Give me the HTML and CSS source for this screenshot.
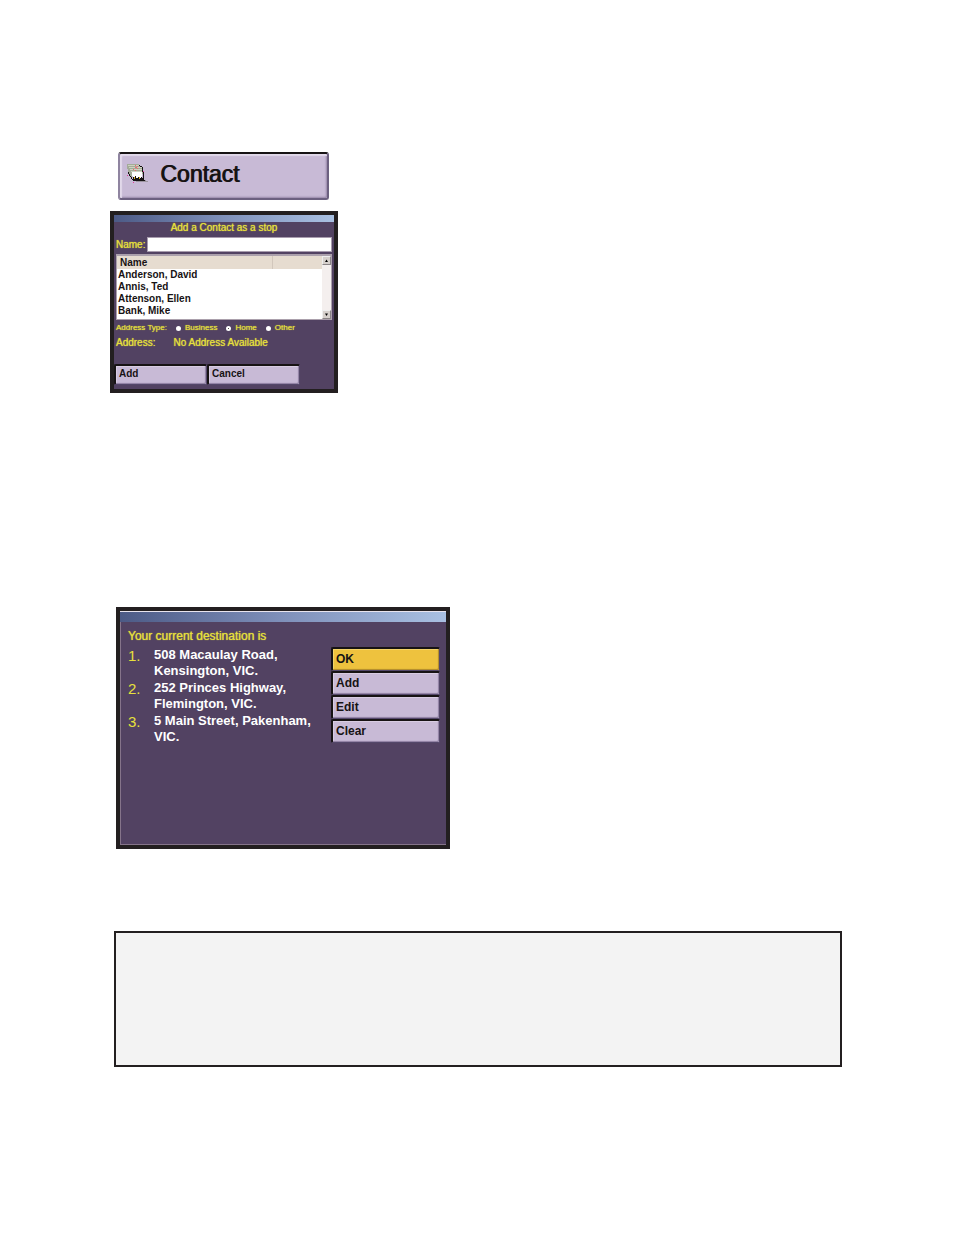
FILE: index.html
```
<!DOCTYPE html>
<html lang="en">
  <head>
  <meta charset="utf-8">
  <title>Contact</title>
  <link rel="stylesheet" href="styles.css">
  </head>

  <body>
  <button type="button" class="contact">
    <svg class="cards" viewBox="0 0 63 60" width="21" height="20" shape-rendering="crispEdges" aria-hidden="true">
      <path d="M0 0h36v6h9v6h3v18h-3v6H15v6h-3v-3H9v-6H6v-9H3v-9H0z" fill="#a3ab98"/>
      <path d="M3 3h33v3H3zM6 9h39v3H6zM9 15h36v3H9zM12 21h36v3H12z" fill="#cdd2c0"/>
      <path d="M24 3h3v3h-3zM24 9h6v3h-6zM30 6h3v3h-3zM18 15h3v3h-3zM24 18h3v3h-3zM30 12h3v3h-3z" fill="#ef6670"/>
      <path d="M15 24h30v18H18v-6h-3z" fill="#fff"/>
      <path d="M36 3h3v3h-3zM39 6h6v3h-6zM45 9h3v15h-3zM48 24h3v18h-3zM3 24h3v6H3zM6 30h3v6H6zM9 36h3v3H9zM12 39h3v6h-3zM15 45h3v3h-3z" fill="#171314"/>
      <path d="M18 39h6v-3h3v6h6v-3h3v3h6v-3h3v3h6v6h6v3h-9v3H27v-3h-9z" fill="#171314"/>
      <path d="M21 39h3v6h-3zM36 39h3v6h-3z" fill="#d8b02c"/>
      <path d="M27 54h36v-3h-6v-3h-3v3H27z" fill="#9c949f"/>
      <path d="M0 33h3v3H0zM18 54h3v3h-3zM48 21h3v3h-3z" fill="#e03a9a"/>
    </svg>
    <span>Contact</span>
  </button>

  <form class="window picker">
    <div class="titlebar"></div>
    <h2>Add a Contact as a stop</h2>
    <div class="name-row">
      <label for="name">Name:</label>
      <input id="name" type="text">
    </div>
    <div class="list">
      <table>
        <thead>
          <tr><th>Name</th><th class="extra"></th></tr>
        </thead>
        <tbody>
          <tr><td colspan="2">Anderson, David</td></tr>
          <tr><td colspan="2">Annis, Ted</td></tr>
          <tr><td colspan="2">Attenson, Ellen</td></tr>
          <tr><td colspan="2">Bank, Mike</td></tr>
        </tbody>
      </table>
      <div class="scroll">
        <button type="button" aria-label="Scroll up"><svg viewBox="0 0 10 10" width="5" height="5"><path d="M2 8h6L5 3z"/></svg></button>
        <button type="button" aria-label="Scroll down"><svg viewBox="0 0 10 10" width="5" height="5"><path d="M2 3h6L5 8z"/></svg></button>
      </div>
    </div>
    <div class="types">
      <span>Address Type:</span>
      <label><input type="radio" name="type"> Business</label>
      <label><input type="radio" name="type" checked> Home</label>
      <label><input type="radio" name="type"> Other</label>
    </div>
    <div class="address">
      <span>Address:</span>
      <span>No Address Available</span>
    </div>
    <div class="actions">
      <button type="button" class="key">Add</button>
      <button type="button" class="key">Cancel</button>
    </div>
  </form>

  <div class="window route">
    <div class="titlebar"></div>
    <h2>Your current destination is</h2>
    <div class="route-body">
      <ol>
        <li><span class="num">1.</span><span>508 Macaulay Road,<br>Kensington, VIC.</span></li>
        <li><span class="num">2.</span><span>252 Princes Highway,<br>Flemington, VIC.</span></li>
        <li><span class="num">3.</span><span>5 Main Street, Pakenham,<br>VIC.</span></li>
      </ol>
      <div class="menu">
        <button type="button" class="key ok">OK</button>
        <button type="button" class="key">Add</button>
        <button type="button" class="key">Edit</button>
        <button type="button" class="key">Clear</button>
      </div>
    </div>
  </div>

  <div class="note"></div>
  </body>
</html>
```

FILE: styles.css
```
* {
  box-sizing: border-box;
}

body {
  margin: 0;
  padding: 152px 112px 168px 110px;
  background: #fff;
  color: #171314;
  font-family: "Liberation Sans", Arial, sans-serif;
}

button, input {
  font: inherit;
  color: inherit;
  margin: 0;
}

h2 {
  margin: 0;
  font-weight: normal;
  color: #e6e03c;
  text-shadow: 0 0 1px #e6e03c;
}

.contact {
  display: flex;
  align-items: center;
  gap: 12px;
  width: 211px;
  height: 48px;
  margin-left: 8px;
  padding: 0 7px 4px;
  border: 2px solid;
  border-color: #171314 #6c6080 #6c6080 #8f84a0;
  background: #c8bad6;
  box-shadow: inset 2px 2px 1px #e2d9ea, inset -1px -1px 2px #9686a8;
  border-radius: 3px;
  font-size: 23px;
  text-shadow: 1px 0 #171314;
}

.window {
  border: 4px solid #231f20;
  background: #524262;
}

.titlebar {
  background: linear-gradient(to right, #4c5a86, #7f90ba 50%, #a9c0e2);
}

.key {
  padding: 0 3px 2px;
  border: 1px solid;
  border-width: 2px 1px 1px 2px;
  border-color: #171314 #54486a #54486a #171314;
  border-radius: 2px;
  background: #c8bad6;
  box-shadow: inset -1px -1px 1px #8f80a2, inset 1px 1px #d8cce2;
  text-align: left;
  font-weight: bold;
}

/* contact picker */

.picker {
  width: 228px;
  margin-top: 11px;
  padding-bottom: 4px;
  font-size: 10px;
  line-height: 12px;
}

.picker .titlebar {
  height: 7px;
}

.picker h2 {
  text-align: center;
  font-size: 10px;
  line-height: 12px;
}

.name-row {
  display: flex;
  align-items: center;
  gap: 2px;
  margin: 3px 2px 2px;
  color: #e6e03c;
  text-shadow: 0 0 1px #e6e03c;
}

.name-row input {
  flex: 1;
  min-width: 0;
  height: 15px;
  padding: 0 2px;
  border: 1px solid #a89cae;
  border-radius: 0;
  background: #fff;
  color: #171314;
}

.list {
  display: flex;
  align-items: flex-start;
  height: 66px;
  margin: 0 2px;
  border: 2px solid #aba0ac;
  border-width: 2px 1px 1px;
  background: #fff;
}

.list table {
  flex: 1;
  border-collapse: collapse;
  font-weight: bold;
}

.list th, .list td {
  height: 12px;
  padding: 0 1px;
  text-align: left;
}

.list th {
  height: 13px;
  padding: 0 3px;
  background: #e6dcd0;
  border-right: 1px solid #d2c7bc;
}

.list .extra {
  width: 50px;
  border-right: 0;
}

.scroll {
  display: flex;
  flex-direction: column;
  justify-content: space-between;
  align-self: stretch;
  background: #f4efee;
}

.scroll button {
  display: flex;
  padding: 1px;
  border: 1px solid;
  border-color: #eee #8a8486 #8a8486 #eee;
  background: #d6d0cc;
}

.types {
  display: flex;
  gap: 9px;
  padding: 2px 2px 0;
  color: #e6e03c;
  font-size: 8px;
  text-shadow: 0 0 1px #e6e03c;
}

.types label {
  display: flex;
  align-items: center;
  gap: 4px;
}

.types input {
  appearance: none;
  width: 5px;
  height: 5px;
  border: 2px solid #fff;
  border-radius: 50%;
  background: #fff;
}

.types input:checked {
  background: #171314;
}

.address {
  display: flex;
  gap: 18px;
  padding: 3px 2px 0;
  color: #e6e03c;
  text-shadow: 0 0 1px #e6e03c;
}

.actions {
  display: flex;
  margin-top: 15px;
}

.actions .key {
  width: 93px;
  height: 21px;
}

/* current destination */

.route {
  width: 334px;
  height: 242px;
  margin: 214px 0 0 6px;
  box-shadow: inset 1px -1px #85748a;
}

.route .titlebar {
  height: 11px;
  border-top: 1px solid #e8e4ee;
}

.route h2 {
  padding: 7px 8px 0;
  font-size: 12px;
  line-height: 14px;
}

.route-body {
  display: flex;
  justify-content: space-between;
  padding: 4px 6px 0 8px;
}

.route ol {
  margin: 0;
  padding: 0;
  list-style: none;
  color: #fff;
  font-size: 13px;
  font-weight: bold;
  line-height: 16px;
}

.route li {
  display: flex;
  margin-bottom: 1px;
}

.num {
  width: 26px;
  color: #e6e03c;
  font-size: 15px;
  font-weight: normal;
  line-height: 18px;
}

.menu {
  display: flex;
  flex-direction: column;
  width: 109px;
}

.menu .key {
  height: 24px;
  font-size: 12px;
}

.key.ok {
  background: #eec23e;
  box-shadow: inset -1px -1px 1px #b08a2c, inset 1px 1px #f4d468;
}

.note {
  min-height: 136px;
  margin: 82px 0 0 4px;
  border: 2px solid #231f20;
  background: #f3f3f3;
}
```
